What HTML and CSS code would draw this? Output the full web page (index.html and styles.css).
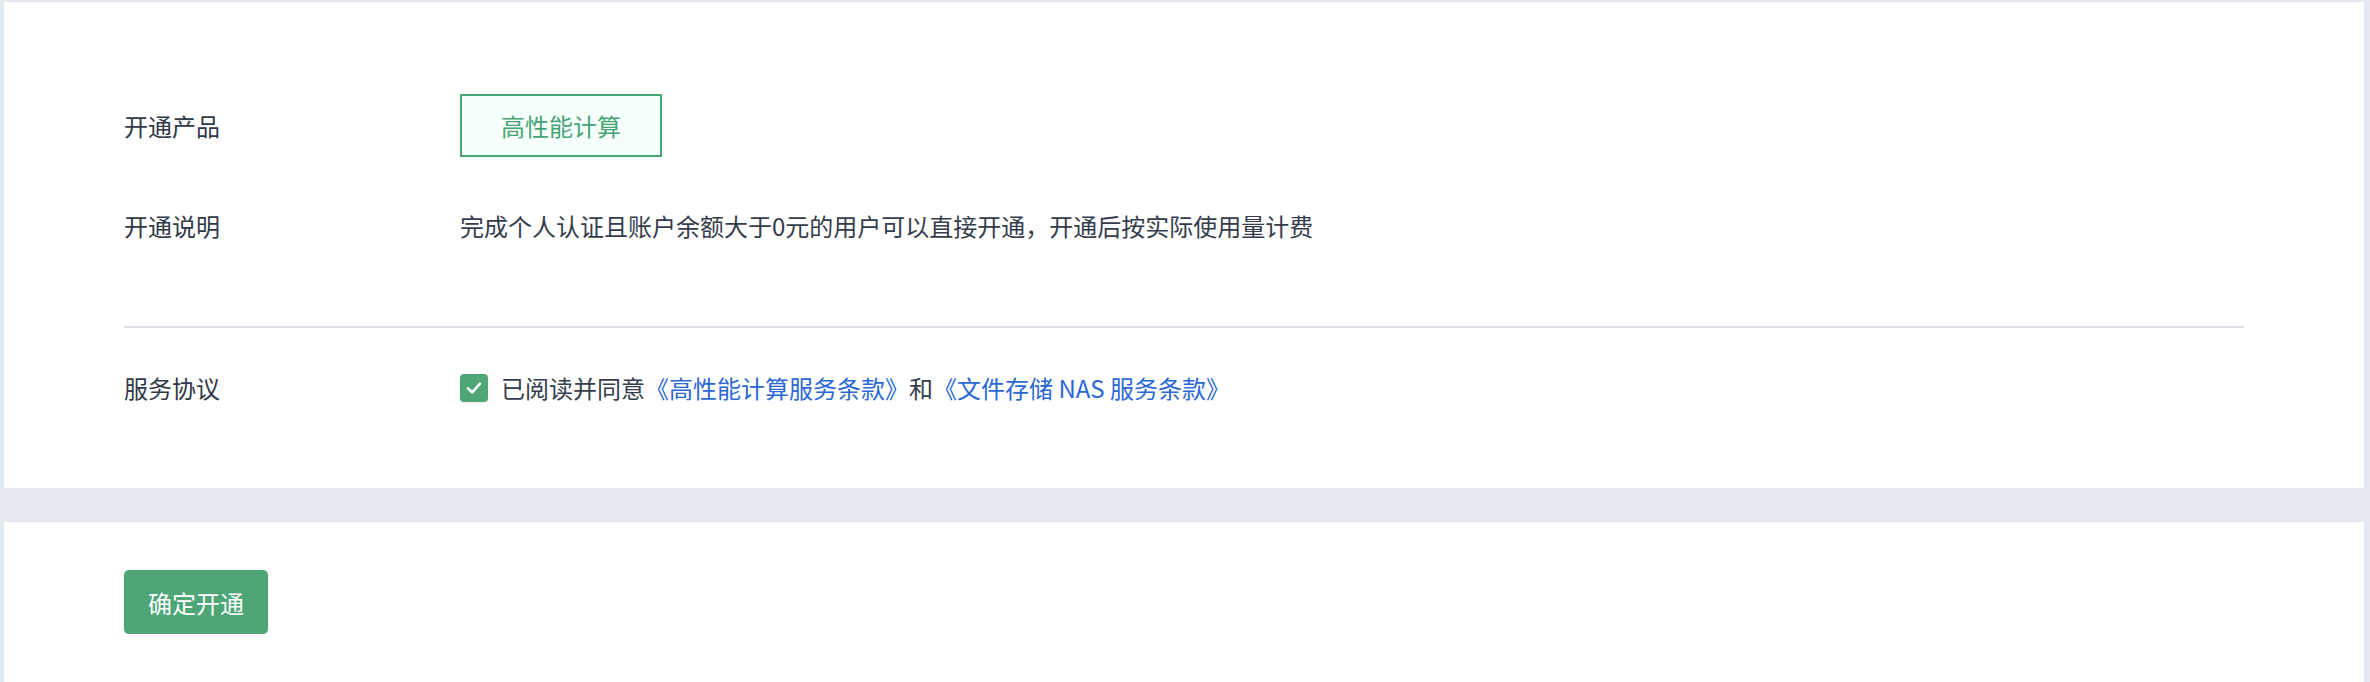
FILE: index.html
```html
<!DOCTYPE html>
<html lang="zh-CN">
<head>
<meta charset="utf-8">
<title>开通产品</title>
<link rel="stylesheet" href="styles.css">
</head>
<body>
<div class="page">
  <section class="card card-form">
    <div class="row row-product">
      <div class="label">开通产品</div>
      <div class="value">
        <div class="product-tag">高性能计算</div>
      </div>
    </div>
    <div class="row row-desc">
      <div class="label">开通说明</div>
      <div class="value">完成个人认证且账户余额大于0元的用户可以直接开通，开通后按实际使用量计费</div>
    </div>
    <div class="divider"></div>
    <div class="row row-agree">
      <div class="label">服务协议</div>
      <div class="value agree">
        <span class="checkbox">
          <svg width="20" height="20" viewBox="0 0 20 20"><path d="M4 10.4 L8.2 14.4 L16 5.6" fill="none" stroke="#fff" stroke-width="2.6" stroke-linecap="round" stroke-linejoin="round"/></svg>
        </span>
        <span>已阅读并同意</span><a class="link" href="#">《高性能计算服务条款》</a><span>和</span><a class="link" href="#">《文件存储 NAS 服务条款》</a>
      </div>
    </div>
  </section>
  <section class="card card-actions">
    <button class="btn-primary" type="button">确定开通</button>
  </section>
</div>
</body>
</html>
```
FILE: styles.css
```css
* { box-sizing: border-box; }
html, body { margin: 0; padding: 0; }
body {
  background: #e4e9f1;
  font-family: "Noto Sans CJK SC", "Noto Sans", sans-serif;
  color: #353c4b;
  font-size: 24px;
  height: 682px;
  overflow: hidden;
}
.page {
  padding: 2px 6px 0 4px;
  display: flex;
  flex-direction: column;
  gap: 34px;
}
.card {
  background: #fff;
}
.card-form {
  height: 486px;
  padding: 92px 120px 0 120px;
}
.row {
  display: flex;
  align-items: center;
}
.label {
  width: 336px;
  flex: none;
  line-height: 36px;
  color: #313848;
}
.value { line-height: 36px; }
.row-product { height: 63px; }
.product-tag {
  width: 202px;
  height: 63px;
  border: 2px solid #4aa574;
  background: #f5fffb;
  color: #46a473;
  display: flex;
  align-items: center;
  justify-content: center;
  box-shadow: 0 2px 4px rgba(0, 0, 0, 0.04);
}
.row-desc { margin-top: 51px; height: 36px; }
.divider {
  margin-top: 82px;
  height: 2px;
  background: #dcdfe8;
}
.row-agree { margin-top: 42px; height: 36px; }
.agree {
  display: flex;
  align-items: center;
}
.checkbox {
  width: 28px;
  height: 28px;
  border-radius: 4px;
  background: #4ea677;
  display: inline-flex;
  align-items: center;
  justify-content: center;
  margin-right: 13px;
  box-shadow: 0 1px 2px rgba(0, 0, 0, 0.08);
}
.link {
  color: #2b68d4;
  text-decoration: none;
}
.card-actions {
  height: 160px;
  padding: 48px 120px 0 120px;
}
.btn-primary {
  width: 144px;
  height: 64px;
  border: none;
  border-radius: 5px;
  background: #4ea577;
  color: #fff;
  font-family: inherit;
  font-size: 24px;
  padding: 0;
  box-shadow: 0 2px 4px rgba(0, 0, 0, 0.05);
}
```
